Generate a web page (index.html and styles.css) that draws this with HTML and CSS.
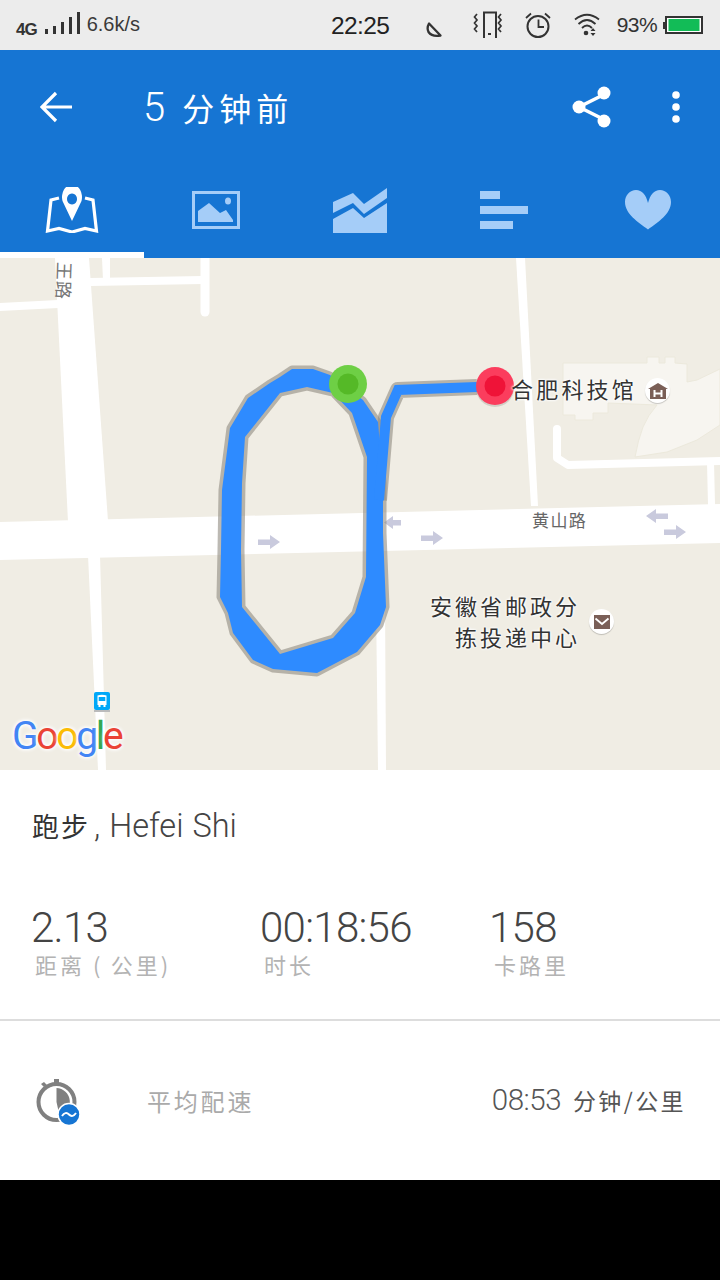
FILE: index.html
```html
<!DOCTYPE html>
<html lang="zh">
<head>
<meta charset="utf-8">
<title>5 分钟前</title>
<link rel="stylesheet" href="styles.css">
</head>
<body>
<div class="app">
  <div class="status">
    <div class="status-left">
      <span class="net">4G</span>
      <svg class="signal" width="36" height="24" viewBox="0 0 36 24"><path d="M1 22v-5h3v5zM9 22v-8h3v8zM17 22v-12h3v12zM25 22v-17h3v17zM33 22v-22h3v22z" fill="#333"/></svg>
      <span class="speed">6.6k/s</span>
    </div>
    <span class="clock">22:25</span>
    <div class="status-right">
      <svg class="moon" width="16" height="16" viewBox="0 0 16 16"><path d="M3 1.500Q0.500 6 2.500 10 6 15 14.500 13.500Z" fill="none" stroke="#333" stroke-width="2.300" stroke-linejoin="round"/></svg>
      <svg class="vib" width="32" height="28" viewBox="0 0 32 28"><path d="M10 1.500h13V27M11 1.500V27M15 23h3" fill="none" stroke="#333" stroke-width="2"/><path d="M4 3l-2.500 3 2.500 3-2.500 3 2.500 3-2.500 3 2.500 3M28 3l-2.500 3 2.500 3-2.500 3 2.500 3-2.500 3 2.500 3" fill="none" stroke="#333" stroke-width="1.700"/></svg>
      <svg class="alarm" width="26" height="26" viewBox="0 0 26 26"><circle cx="13" cy="14.500" r="10.500" fill="none" stroke="#333" stroke-width="2"/><path d="M13.500 7.500v7.500H19M1 6l5-4.500M25 6l-5-4.500" fill="none" stroke="#333" stroke-width="1.800"/></svg>
      <svg class="wifi" width="26" height="24" viewBox="0 0 26 24"><path d="M1 6.500Q13-3 25 6.500M4.500 11Q13 3 21.500 11M8 15Q13 10 18 15" fill="none" stroke="#333" stroke-width="1.800"/><circle cx="12" cy="20" r="2.300" fill="#333"/><path d="M19 15l-2.500 3h5zM19 23l-2.500-3h5z" fill="#333"/></svg>
      <span class="pct">93%</span>
      <svg class="batt" width="40" height="18" viewBox="0 0 40 18"><path d="M0 6h2v7H0z" fill="#333"/><rect x="3" y="1" width="36" height="16" fill="#fff" stroke="#333" stroke-width="2"/><rect x="5.500" y="3" width="31" height="12" fill="#12bc57"/></svg>
    </div>
  </div>

  <header class="appbar">
    <div class="toolbar">
      <svg class="back" width="32" height="32" viewBox="0 0 32 32"><path d="M32 16H3M16 2L2 16l14 14" fill="none" stroke="#fff" stroke-width="3.200"/></svg>
      <h1 class="title"><span class="title-num">5</span> 分钟前</h1>
      <svg class="share" width="40" height="42" viewBox="0 0 40 42"><path d="M33 8L7 21l26 13" fill="none" stroke="#fff" stroke-width="3.500"/><circle cx="32" cy="7" r="6.500" fill="#fff"/><circle cx="7" cy="21" r="6.500" fill="#fff"/><circle cx="32" cy="35" r="6.500" fill="#fff"/></svg>
      <svg class="more" width="8" height="34" viewBox="0 0 8 34"><circle cx="4" cy="5" r="3.800" fill="#fff"/><circle cx="4" cy="17" r="3.800" fill="#fff"/><circle cx="4" cy="29" r="3.800" fill="#fff"/></svg>
    </div>
    <nav class="tabs">
      <div class="tab tab-active">
        <svg width="54" height="46" viewBox="0 0 54 46"><path d="M14 11L6 13 2.500 44 14 41.500 27 45 40 41.500 51.500 44 48 13 40 11" fill="none" stroke="#fff" stroke-width="3.200"/><path fill-rule="evenodd" d="M27 34L17.500 14A10 12.500 0 1 1 36.500 14ZM27 6.500a5 5.500 0 1 0 .01 0Z" fill="#fff"/></svg>
      </div>
      <div class="tab">
        <svg width="48" height="38" viewBox="0 0 48 38"><rect x="1.500" y="1.500" width="45" height="35" fill="none" stroke="#a5cdf8" stroke-width="3"/><path d="M6 20L17 12 28 22 34 19 41 29V31H6Z" fill="#a5cdf8"/><ellipse cx="36" cy="10" rx="3" ry="3.500" fill="#a5cdf8"/></svg>
      </div>
      <div class="tab">
        <svg width="54" height="46" viewBox="0 0 54 46"><path d="M0 15L20 6 31 17 54 1V11L31 27 20 16 0 26ZM0 32L20 21 31 31 54 16V46H0Z" fill="#a5cdf8"/></svg>
      </div>
      <div class="tab">
        <svg width="48" height="38" viewBox="0 0 48 38"><path d="M0 0H20V8H0ZM0 15H48V23H0ZM0 30H33V38H0Z" fill="#a5cdf8"/></svg>
      </div>
      <div class="tab">
        <svg width="48" height="40" viewBox="0 0 48 40"><path d="M24 39.500C14 32 1 24 1 12 1 5 6 0 12 0 18 0 22 5 24 13 26 5 30 0 36 0 42 0 47 5 47 12 47 24 34 32 24 39.500Z" fill="#a5cdf8"/></svg>
      </div>
    </nav>
  </header>

  <section class="map">
    <svg class="map-art" width="720" height="512" viewBox="0 258 720 512">
      <g fill="#f7f5f0" stroke="#ece9dc" stroke-width="1">
        <path d="M563 363H647V357H659V363H665V357H675V363L687 364V382L697 380 720 369V425L697 440 667 452 635 457Q638 440 643 427 648 415 657 405L608 403V413H593V420H575V415H563Z"/>
      </g>
      <g fill="#fff">
        <path d="M0 522L720 504V543L0 560Z"/>
        <path d="M55 258H89L108 521 68 522Z"/>
        <path d="M88 555H100L106 770H98Z"/>
        <path d="M0 303L58 300V308L0 311Z"/>
        <path d="M90 278L203 276V284L90 286Z"/>
        <path d="M102 258H110V280H103Z"/>
        <path d="M516 258H525L538 506H531Z"/>
        <path d="M376 600H385L386 770H378Z"/>
        <path d="M707 462H714L715 505H708Z"/>
      </g>
      <path d="M205 258V312" fill="none" stroke="#fff" stroke-width="9" stroke-linecap="round"/>
      <path d="M557 429V458L568 465 720 461" fill="none" stroke="#fff" stroke-width="8" stroke-linecap="round" stroke-linejoin="round"/>
      <g fill="#c9cadd">
        <path d="M258 539.500H270V535L280 542 270 549V545H258Z"/>
        <path d="M401 520H393V516L384 522.500 393 529V525.500H401Z"/>
        <path d="M421 535.500H433V531L443 538 433 545V541H421Z"/>
        <path d="M668 513.500H656V509L646 516 656 523V519H668Z"/>
        <path d="M664 529.500H676V525L686 532 676 539V535H664Z"/>
      </g>
      <g class="route-shadow" fill="none" stroke="#8f8a80" stroke-opacity=".6" stroke-width="7" stroke-linejoin="round">
        <path d="M292 369L313 369 330 375 363 400 378 422 383 483 383 533 386 607 380 625 357 652 317 673 273 669 253 660 233 633 228 613 220 597 221 550 222 490 230 428 248 398 270 383 280 377Z"/>
        <path d="M280 393L307 387 333 393 352 413 367 457 366 577 355 613 333 638 280 654 242 607 241 550 242 483 245 437Z"/>
        <path d="M379 500L386 417 398 390 477 387" stroke-width="16"/>
      </g>
      <path fill="#2e8bff" fill-rule="evenodd" d="M292 369L313 369 330 375 363 400 378 422 383 483 383 533 386 607 380 625 357 652 317 673 273 669 253 660 233 633 228 613 220 597 221 550 222 490 230 428 248 398 270 383 280 377ZM280 393L307 387 333 393 352 413 367 457 366 577 355 613 333 638 280 654 242 607 241 550 242 483 245 437Z"/>
      <path d="M379 500L386 417 398 390 477 387" fill="none" stroke="#2e8bff" stroke-width="10"/>
      <circle cx="348" cy="384" r="19" fill="#6ecf45"/>
      <circle cx="348" cy="384" r="10.500" fill="#55b927"/>
      <circle cx="495" cy="388" r="19" fill="#8f8a80" fill-opacity=".3"/>
      <circle cx="495" cy="386" r="19" fill="#fb3d5d"/>
      <circle cx="495" cy="386" r="10.500" fill="#ef1338"/>
    </svg>

    <span class="road-v">王路</span>
    <span class="label label-museum">合肥科技馆</span>
    <span class="label label-road">黄山路</span>
    <span class="label label-post">安徽省邮政分<br>拣投递中心</span>

    <span class="poi poi-home">
      <svg width="20" height="18" viewBox="0 0 20 18"><path d="M10 1L0 7h2v10h16V7h2ZM5.500 8h2v2.500h5V8h2v7h-2v-2.500h-5V15h-2Z" fill="#7a5f57" fill-rule="evenodd"/></svg>
    </span>
    <span class="poi poi-mail">
      <svg width="16" height="14" viewBox="0 0 16 14"><path fill="#7a5f57" d="M0 0H16V14H0Z"/><path d="M1.500 3.500L8 9l6.500-5.500" fill="none" stroke="#fff" stroke-width="1.800"/></svg>
    </span>
    <span class="bus">
      <svg width="16" height="18" viewBox="0 0 16 18"><rect width="16" height="18" rx="2" fill="#00a8f8"/><path d="M3.500 3.500Q8 1.800 12.500 3.500V13H3.500Z" fill="#fff"/><path d="M4.700 5H11.300V9H4.700Z" fill="#00a8f8"/><path d="M4.500 13h2v2h-2zM9.500 13h2v2h-2z" fill="#fff"/></svg>
    </span>
    <div class="google"><span class="g-b">G</span><span class="g-r">o</span><span class="g-y">o</span><span class="g-b">g</span><span class="g-g">l</span><span class="g-r">e</span></div>
  </section>

  <section class="details">
    <div class="activity"><span class="cjk-dark">跑步</span>, Hefei Shi</div>
    <div class="stats">
      <div class="stat"><div class="stat-value">2.13</div><div class="stat-label">距离 (&#8201;公里)</div></div>
      <div class="stat"><div class="stat-value">00:18:56</div><div class="stat-label">时长</div></div>
      <div class="stat"><div class="stat-value">158</div><div class="stat-label stat-label-wide">卡路里</div></div>
    </div>
    <div class="pace">
      <svg class="pace-icon" width="46" height="48" viewBox="0 0 46 48"><path d="M18 0h5v4h-5zM5 5l3-2 3 3-3 2z" fill="#808080"/><circle cx="20.500" cy="23" r="18" fill="none" stroke="#808080" stroke-width="4"/><path d="M20.500 9a14 14 0 0 1 3 27.500L20.500 23 8 30l12.500-7Z" fill="#808080"/><circle cx="33" cy="35.500" r="11" fill="#1675d3" stroke="#fff" stroke-width="1.500"/><path d="M26 37q3.500-5 7-1.500t7-1.500" fill="none" stroke="#fff" stroke-width="2"/></svg>
      <span class="pace-label">平均配速</span>
      <span class="pace-value"><span class="pace-num">08:53</span> <span class="pace-unit">分钟/公里</span></span>
    </div>
  </section>

  <div class="navbar"></div>
</div>
</body>
</html>
```
FILE: styles.css
```css
* { box-sizing: border-box; }
html, body { margin: 0; padding: 0; }
body { width: 720px; height: 1280px; overflow: hidden; background: #000; font-family: Roboto, "Noto Sans CJK SC", sans-serif; }
.app { display: flex; flex-direction: column; width: 720px; height: 1280px; }
svg { display: block; flex: none; }

.status { height: 50px; background: #ececec; position: relative; display: flex; align-items: center; justify-content: space-between; padding: 0 17px 0 16px; color: #333; font-family: "Liberation Sans", sans-serif; }
.status-left, .status-right { display: flex; align-items: center; }
.net { font-size: 17px; font-weight: 700; letter-spacing: -1px; margin: 9px 7px 0 0; }
.signal { margin: 0 7px 2px 0; }
.speed { font-size: 20px; margin-top: -1px; color: #3a3a3a; }
.clock { position: absolute; left: 331px; top: 11px; font-size: 24.500px; line-height: 29px; letter-spacing: -.6px; color: #222; }
.moon { margin: 9px 31px 0 0; }
.vib { margin: 0 20px 0 0; }
.alarm { margin: 0 23px 0 0; }
.wifi { margin: 0 17px 0 0; }
.pct { font-size: 21px; letter-spacing: -.6px; margin-right: 6px; }

.appbar { height: 208px; background: #1675d3; display: flex; flex-direction: column; }
.toolbar { height: 114px; display: flex; align-items: center; padding: 0 40px; color: #fff; }
.back { margin: 0 71px 0 0; }
.title { margin: 0; font-weight: 400; font-size: 32px; letter-spacing: 5px; flex: 1; font-family: "Noto Sans CJK SC", sans-serif; line-height: 40px; }
.title-num { font-family: Roboto, sans-serif; font-weight: 300; font-size: 40px; letter-spacing: 0; margin-right: 5px; }
.share { margin-right: 60px; }
.tabs { height: 94px; display: flex; }
.tab { width: 144px; height: 94px; display: flex; justify-content: center; align-items: center; padding-top: 4px; border-bottom: 6px solid transparent; }
.tab-active { border-bottom-color: #fff; }

.map { height: 512px; background: #f0ede4; position: relative; overflow: hidden; flex: none; }
.map-art { position: absolute; left: 0; top: 0; }
.route-shadow { filter: blur(.7px); }
.label, .road-v { position: absolute; font-family: "Noto Sans CJK SC", sans-serif; white-space: nowrap; }
.label { text-shadow: 0 0 3px #fff, 0 0 3px #fff, 0 0 2px #fff; }
.label-museum { left: 511px; top: 115px; font-size: 22px; letter-spacing: 3.200px; line-height: 30px; color: #333; }
.label-road { left: 532px; top: 250px; font-size: 17px; letter-spacing: 1.400px; line-height: 24px; color: #666; }
.label-post { right: 140px; top: 332px; font-size: 22px; letter-spacing: 3px; line-height: 31px; color: #333; text-align: right; }
.road-v { left: 46px; top: 12px; font-size: 18px; line-height: 22px; letter-spacing: 1px; color: #777; transform: rotate(92deg); }
.poi { position: absolute; width: 25px; height: 25px; border-radius: 50%; background: #fff; box-shadow: 0 1px 1px rgba(0,0,0,.2); display: flex; align-items: center; justify-content: center; }
.poi-home { left: 645px; top: 120px; }
.poi-mail { left: 589px; top: 351px; }
.bus { position: absolute; left: 94px; top: 434px; box-shadow: 0 2px 0 #bbb; }
.google { position: absolute; left: 12px; top: 455px; font-family: Roboto, sans-serif; font-size: 39px; line-height: 46px; font-weight: 400; letter-spacing: -2.300px; text-shadow: 0 0 3px #fff, 0 0 4px #fff, 0 0 5px #fff; }
.g-b { color: #4285f4; }
.g-r { color: #ea4335; }
.g-y { color: #fbbc05; }
.g-g { color: #34a853; }

.details { height: 410px; flex: none; background: #fff; display: flex; flex-direction: column; }
.activity { padding: 0 32px; margin-top: 36px; height: 40px; line-height: 40px; font-size: 32.500px; font-weight: 300; color: #444; word-spacing: 1px; white-space: nowrap; }
.cjk-dark { font-family: "Noto Sans CJK SC", sans-serif; font-size: 27px; letter-spacing: 2px; color: #333; font-weight: 400; margin-right: 4px; }
.stats { display: grid; grid-template-columns: 229px 229px 1fr; padding-left: 31px; margin-top: 61px; height: 114px; border-bottom: 2px solid #ddd; flex: none; }
.stat-value { font-size: 42px; line-height: 42px; font-weight: 300; letter-spacing: -.7px; color: #444; }
.stat-label { font-family: "Noto Sans CJK SC", sans-serif; font-size: 22px; letter-spacing: 3px; line-height: 30px; color: #b3b3b3; padding-left: 4px; }
.stat-label-wide { padding-left: 5px; }
.pace { flex: 1; display: flex; align-items: center; padding: 0 34px 0 36px; }
.pace-icon { margin-top: 5px; }
.pace-label { margin-left: 65px; font-family: "Noto Sans CJK SC", sans-serif; font-size: 24px; letter-spacing: 2.800px; color: #aaa; flex: 1; }
.pace-value { color: #555; white-space: nowrap; margin-top: -2px; }
.pace-num { font-size: 29.500px; font-weight: 300; letter-spacing: -.5px; }
.pace-unit { font-family: "Noto Sans CJK SC", sans-serif; font-size: 23px; letter-spacing: 2.400px; margin-left: 8px; }
.navbar { flex: 1; background: #000; }
```
